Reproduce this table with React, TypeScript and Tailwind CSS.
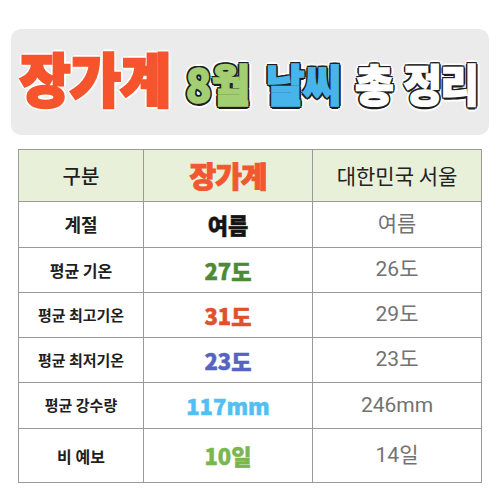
import React from "react";

const outlined =
  "[text-shadow:2.5px_0_0_#1e1e1e,-2.5px_0_0_#1e1e1e,0_2.5px_0_#1e1e1e,0_-2.5px_0_#1e1e1e,1.8px_1.8px_0_#1e1e1e,-1.8px_1.8px_0_#1e1e1e,1.8px_-1.8px_0_#1e1e1e,-1.8px_-1.8px_0_#1e1e1e,4.5px_0_0_#fff,-4.5px_0_0_#fff,0_4.5px_0_#fff,0_-4.5px_0_#fff,3.2px_3.2px_0_#fff,-3.2px_3.2px_0_#fff,3.2px_-3.2px_0_#fff,-3.2px_-3.2px_0_#fff]";

type Row = {
  label: string;
  labelSize: string;
  value: string;
  color: string;
  seoul: string;
  h: string;
};

const rows: Row[] = [
  { label: "계절", labelSize: "text-[18px]", value: "여름", color: "text-[#141414]", seoul: "여름", h: "h-[46px]" },
  { label: "평균 기온", labelSize: "text-[16px]", value: "27도", color: "text-[#4d8a38]", seoul: "26도", h: "h-[45px]" },
  { label: "평균 최고기온", labelSize: "text-[15px]", value: "31도", color: "text-[#e1502b]", seoul: "29도", h: "h-[45px]" },
  { label: "평균 최저기온", labelSize: "text-[15px]", value: "23도", color: "text-[#5663c2]", seoul: "23도", h: "h-[45px]" },
  { label: "평균 강수량", labelSize: "text-[15px]", value: "117mm", color: "text-[#52bff4]", seoul: "246mm", h: "h-[46px]" },
  { label: "비 예보", labelSize: "text-[16px]", value: "10일", color: "text-[#7bb54e]", seoul: "14일", h: "h-[54px]" },
];

export default function App() {
  return (
    <div className="w-[500px] h-[500px] bg-white overflow-hidden pt-[29px] [font-family:Roboto,'Noto_Sans_CJK_KR',sans-serif]">
      {/* Title banner */}
      <div className="mx-[11px] h-[106px] rounded-[10px] bg-[#ebebeb] flex items-center justify-center">
        <div className="flex items-baseline gap-[16px] scale-x-[0.96] origin-center whitespace-nowrap [font-family:'Noto_Sans_CJK_KR',sans-serif] font-black leading-none -ml-[4px] mt-[-10px]">
          <span className="text-[58px] text-[#f5542c] [-webkit-text-stroke:2.5px_#f5542c] [text-shadow:3px_0_0_#fff,-3px_0_0_#fff,0_3px_0_#fff,0_-3px_0_#fff,2.2px_2.2px_0_#fff,-2.2px_2.2px_0_#fff,2.2px_-2.2px_0_#fff,-2.2px_-2.2px_0_#fff] tracking-[-1px]">
            장가계
          </span>
          <span className={`text-[44px] text-[#a3cf72] [-webkit-text-stroke:1.5px_#a3cf72] ${outlined}`}>8월</span>
          <span className={`text-[44px] text-[#47b5ec] [-webkit-text-stroke:1.5px_#47b5ec] tracking-[-2px] ${outlined}`}>날씨</span>
          <span className={`text-[44px] text-white [-webkit-text-stroke:1.5px_#fff] ${outlined}`}>총</span>
          <span className={`text-[44px] text-white [-webkit-text-stroke:1.5px_#fff] tracking-[-2px] ${outlined} -ml-[6px]`}>정리</span>
        </div>
      </div>

      {/* Table */}
      <table className="mt-[14px] ml-[18px] w-[463px] border-collapse table-fixed">
        <colgroup>
          <col className="w-[125px]" />
          <col className="w-[169px]" />
          <col className="w-[169px]" />
        </colgroup>
        <thead>
          <tr className="h-[52px] bg-[#e8f0da]">
            <th className="border border-[#9a9a9a] text-[20px] font-medium text-[#1e1e1e] [font-family:'Noto_Sans_CJK_KR',sans-serif]">
              구분
            </th>
            <th className="border border-[#9a9a9a] text-[29px] font-black text-[#f2582f] [-webkit-text-stroke:1px_#f2582f] [font-family:'Noto_Sans_CJK_KR',sans-serif] tracking-[-1px]">
              장가계
            </th>
            <th className="border border-[#9a9a9a] text-[21px] font-normal text-[#222] [font-family:'Noto_Sans_CJK_KR',sans-serif]">
              대한민국 서울
            </th>
          </tr>
        </thead>
        <tbody>
          {rows.map((r) => (
            <tr key={r.label} className={r.h}>
              <td
                className={`border border-[#9a9a9a] text-center font-bold text-[#1e1e1e] ${r.labelSize} [font-family:'Noto_Sans_CJK_KR',sans-serif]`}
              >
                {r.label}
              </td>
              <td
                className={`border border-[#9a9a9a] text-center text-[22px] font-black ${r.color} [-webkit-text-stroke:0.5px_currentColor] [font-family:'Noto_Sans_CJK_KR',sans-serif]`}
              >
                {r.value}
              </td>
              <td className="border border-[#9a9a9a] text-center text-[21px] text-[#727272]">
                {r.seoul}
              </td>
            </tr>
          ))}
        </tbody>
      </table>
    </div>
  );
}
